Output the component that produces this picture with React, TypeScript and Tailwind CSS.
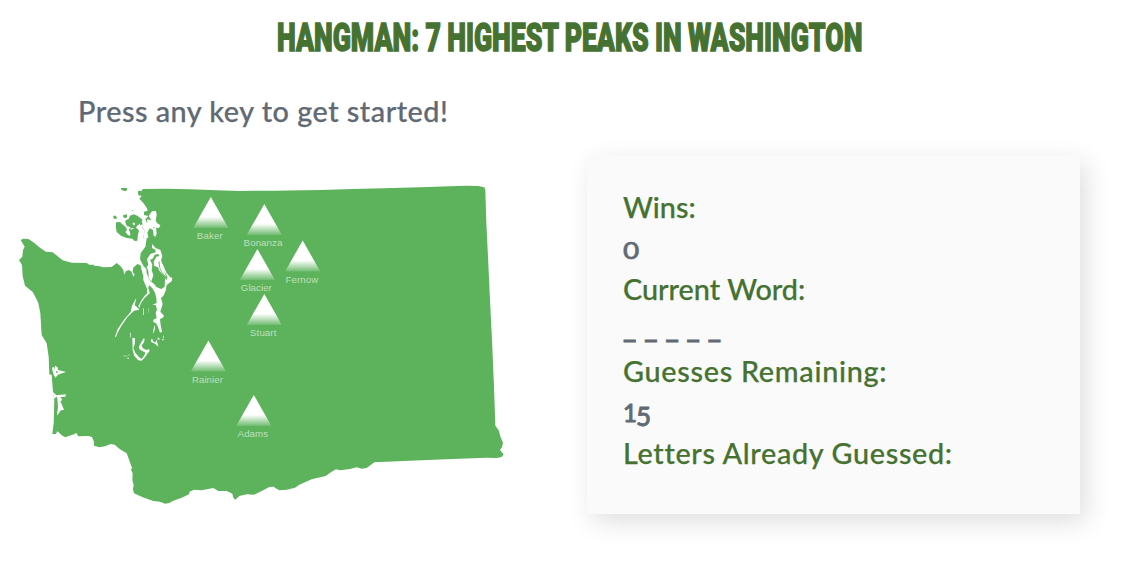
const peaks = [
  { name: 'Baker', x: 210.8, y: 197, label: 196.8, w: 26 },
  { name: 'Bonanza', x: 264.3, y: 204, label: 243.6, w: 38.8 },
  { name: 'Glacier', x: 257.4, y: 249, label: 240.8, w: 31 },
  { name: 'Fernow', x: 302.7, y: 240.5, label: 285.6, w: 32.7 },
  { name: 'Stuart', x: 264.3, y: 294, label: 250, w: 26.4 },
  { name: 'Rainier', x: 208.4, y: 340.6, label: 191.9, w: 31 },
  { name: 'Adams', x: 253.8, y: 395, label: 237.6, w: 30.4 },
];

const mainland =
  'M62,210 L70,206 85,207 100,217 120,233 138,245 158,247 172,258 188,271 215,278 260,279 268,284 280,284 285,288 295,288 310,292 335,291 350,279 362,289 370,300 373,314 377,304 386,300 395,305 400,320 404,315 398,305 400,293 412,282 422,286 424,298 430,287 420,268 422,250 436,230 440,205 430,205 434,180 428,178 428,165 440,158 436,148 445,138 432,135 432,125 443,122 441,115 430,99 418,86 425,78 414,72 417,64 426,62 428,57 500,56 570,58 650,61 720,63 820,62 960,60 1060,57 1150,55 1260,52 1350,49 1400,47 1435,48 1453,52 1456,60 1459,160 1464,260 1470,390 1476,510 1482,650 1486,767 1496,781 1502,802 1509,818 1506,832 1500,840 1511,853 1505,861 1490,864 1460,863 1300,869 1123,877 1112,885 1100,894 1085,896 1070,892 1050,897 1020,901 1008,898 995,905 977,918 935,928 898,944 885,953 860,959 838,961 827,955 821,950 808,951 785,963 762,974 740,973 718,978 706,989 700,983 697,971 680,963 655,963 640,954 605,961 582,959 569,965 567,973 545,983 520,992 508,999 495,1001 480,995 460,993 436,985 425,980 402,970 399,958 401,945 397,930 398,910 393,900 396,893 380,850 360,838 344,824 332,822 315,829 298,832 282,827 282,816 276,801 265,798 235,799 229,789 222,793 208,797 196,802 185,796 173,784 167,792 157,792 161,760 163,690 159,665 155,615 148,613 146,560 140,520 130,503 125,495 121,430 115,400 111,390 98,366 75,347 68,318 66,285 57,270 67,260 69,240 74,230 Z';

const waters = [
  // Puget Sound and Admiralty Inlet
  'M424,297 L430,287 439,297 440,310 446,324 451,334 462,341 469,351 484,357 494,350 495,330 500,317 517,324 515,334 500,345 497,362 490,378 483,384 488,402 481,425 491,436 491,441 480,448 482,465 486,485 480,488 474,470 468,460 459,455 462,448 470,445 467,430 471,418 467,405 457,404 470,399 469,383 465,368 457,355 447,345 445,355 449,368 442,372 441,356 430,330 430,318 Z',
  // Saratoga Passage and Port Susan
  'M456,222 L467,234 481,240 487,258 483,273 492,292 500,310 510,320 500,328 490,315 478,302 474,292 463,288 461,275 469,260 479,258 474,252 464,254 458,266 450,269 457,284 455,301 460,315 454,335 446,324 445,304 440,290 445,285 441,268 451,252 467,247 466,239 456,234 Z',
  // Skagit and Padilla bays
  'M446,138 L456,124 468,123 470,135 467,153 472,160 481,166 477,174 468,173 470,190 467,200 461,197 459,180 449,175 442,188 445,202 438,207 430,204 434,180 428,177 428,164 441,157 442,148 454,151 450,144 Z',
  // Hood Canal
  'M447,365 L449,370 433,385 422,401 418,414 415,408 425,390 434,377 Z',
  'M409,383 L404,406 414,414 418,419 402,422 382,442 364,468 352,490 348,501 345,500 353,477 373,448 392,426 396,407 Z',
  // Southern inlets
  'M397,503 L405,505 405,520 400,535 406,548 414,558 424,567 430,560 436,550 438,541 447,537 449,542 443,550 433,565 424,572 415,571 403,558 398,541 Z',
  'M431,505 L434,506 432,517 425,526 428,534 439,540 447,546 438,549 420,539 416,532 422,520 Z',
  'M454,510 L466,518 469,509 474,524 475,530 466,522 453,515 Z',
  'M464,464 L465,476 461,490 459,487 462,472 Z',
  'M453,508 h5 v7 h-5 Z M473,503 h5 v6 h-5 Z M489,497 h2 v8 h-2 Z M486,508 h5 v3 h-5 Z M430,415 h2 v20 h-2 Z M445,415 h1 v13 h-1 Z M391,488 h2 v14 h-2 Z M370,557 h12 v2 h-12 Z M382,563 h5 v3 h-5 Z M384,554 h5 v2 h-5 Z',
  // Grays Harbor and Willapa Bay
  'M156,594 L161,590 163,599 165,587 173,592 174,600 198,606 180,612 174,614 166,623 160,612 Z',
  'M159,666 L169,676 198,673 196,680 181,681 187,690 181,694 185,703 191,716 191,720 183,721 178,727 173,736 171,733 174,711 172,685 170,680 162,686 Z',
];

const islands = [
  'M363,54 h18 v7 l-6,3 -8,-3 -4,-3 Z',
  'M414,64 l4,-2 8,2 1,10 -9,3 -4,-5 Z',
  'M340,137 l8,0 3,8 -6,3 -5,-5 Z',
  'M369,136 l11,-3 2,7 -6,5 -6,-3 Z M396,121 h3 v2 h-3 Z M420,157 l6,-1 2,7 -8,3 Z',
  'M348,157 L360,156 367,163 378,172 381,180 376,186 384,195 391,197 390,186 386,179 392,172 381,168 376,158 377,151 386,147 390,137 401,133 412,137 426,148 427,153 416,164 411,167 408,174 413,176 417,183 414,193 412,212 404,213 397,206 380,204 363,197 350,186 348,174 Z',
  'M475,276 L480,274 488,286 494,306 502,320 501,331 494,320 480,300 Z',
  'M460,171 h3 v4 h-3 Z M168,604 h5 v4 h-5 Z',
];

const bays = [
  'M478,275 L483,273 491,291 495,313 500,320 493,315 482,300 Z',
  'M398,158 l6,0 1,7 -6,0 Z M391,176 l8,-3 2,3 -9,3 Z',
];

const letters = ['_', '_', '_', '_', '_'];

function WashingtonMap() {
  return (
    <svg className="block h-[360px] w-[530px]" viewBox="0 170 530 360" role="img">
      <defs>
        <linearGradient id="snow" x1="0" y1="0" x2="0" y2="1">
          <stop offset="0" stopColor="#fff" />
          <stop offset="0.64" stopColor="#fff" />
          <stop offset="1" stopColor="#fff" stopOpacity="0.12" />
        </linearGradient>
      </defs>
      <g transform="translate(0 170) scale(0.333333)">
        <path d={mainland} fill="#5cb35c" />
        {waters.map((d) => (
          <path key={d} d={d} fill="#fff" />
        ))}
        {islands.map((d) => (
          <path key={d} d={d} fill="#5cb35c" />
        ))}
        {bays.map((d) => (
          <path key={d} d={d} fill="#fff" />
        ))}
      </g>
      {peaks.map((p) => (
        <g key={p.name}>
          <path d={`M${p.x},${p.y} l17.6,31 h-35.2 Z`} fill="url(#snow)" />
          <text
            x={p.label}
            y={p.y + 42}
            textLength={p.w}
            fill="#fff"
            fillOpacity="0.6"
            className="font-['Liberation_Sans',sans-serif] text-[9.7px] [-webkit-text-stroke:0px]"
          >
            {p.name}
          </text>
        </g>
      ))}
    </svg>
  );
}

export default function App() {
  return (
    <main className="h-[580px] w-[1133px] overflow-hidden bg-white font-['Lato',sans-serif] text-[28.8px] leading-[41px] font-medium text-[#616a74] [font-variant-ligatures:none] [-webkit-text-stroke:0.25px]">
      <h1 className="flex h-[74px] justify-center pt-[1px] pl-[6px] font-['Roboto',sans-serif] text-[39.4px] leading-[74px] font-black whitespace-nowrap text-[#467231] [-webkit-text-stroke:1.5px]">
        <span className="inline-block w-[585px]">
          <span className="inline-block origin-left scale-x-[0.6755] [word-spacing:-0.5px]">
            HANGMAN: 7 HIGHEST PEAKS IN WASHINGTON
          </span>
        </span>
      </h1>
      <div className="flex">
        <section className="w-[587px] shrink-0">
          <p className="h-[96px] pt-[17px] pl-[78px] tracking-[0.5px] whitespace-nowrap">Press any key to get started!</p>
          <WashingtonMap />
        </section>
        <section className="mt-[81px] h-[359px] w-[493px] bg-[#fafafa] pt-[32px] pl-[36px] whitespace-nowrap shadow-[6px_8px_24px_rgba(0,0,0,0.13)]">
          <h2 className="text-[#467231]">Wins:</h2>
          <p className="text-[25px] [-webkit-text-stroke:0.6px]">
            <span className="inline-block origin-bottom-left scale-x-[1.12] scale-y-[0.94]">0</span>
          </p>
          <h2 className="text-[#467231]">Current Word:</h2>
          <p className="flex gap-[9.5px] [-webkit-text-stroke:1px]">
            {letters.map((w, i) => (
              <span key={i} className="relative top-[-3px] w-[11.7px]">
                {w}
              </span>
            ))}
          </p>
          <h2 className="tracking-[0.72px] text-[#467231]">Guesses Remaining:</h2>
          <p className="text-[24px] [-webkit-text-stroke:0.8px]">
            1<span className="relative top-[4px] left-[-1px] text-[26px]">5</span>
          </p>
          <h2 className="tracking-[0.66px] text-[#467231]">Letters Already Guessed:</h2>
        </section>
      </div>
    </main>
  );
}
